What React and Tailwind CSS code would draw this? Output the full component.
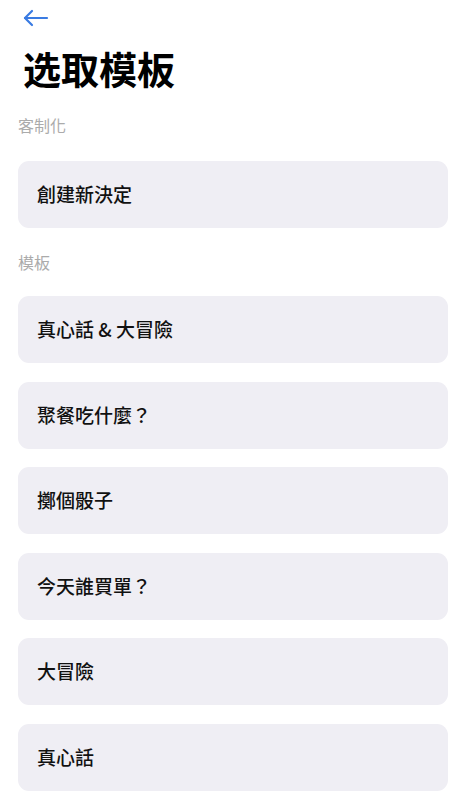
import React from 'react';

const templates = ['真心話 & 大冒險', '聚餐吃什麼？', '擲個骰子', '今天誰買單？', '大冒險', '真心話'];

function Card({ label }) {
  return (
    <button className="flex h-[67px] w-full items-center rounded-[11px] bg-[#efeef4] pl-[19px] text-left text-[19px] font-medium text-[#111]">
      {label}
    </button>
  );
}

export default function App() {
  return (
    <div
      className="min-h-[800px] bg-white px-[18px]"
      style={{ fontFamily: '"Noto Sans CJK TC", "Noto Sans CJK SC", "Noto Sans", sans-serif' }}
    >
      <div className="pt-[9px] pl-[4px]">
        <svg width="28" height="18" viewBox="0 0 28 18" fill="none" stroke="#3a7be2" strokeWidth="2.2" strokeLinecap="round" strokeLinejoin="round">
          <path d="M25 9H3" />
          <path d="M10 2L3 9l7 7" />
        </svg>
      </div>

      <h1 className="mt-[17px] pl-[5px] text-[38px] font-semibold leading-[48px] text-black">选取模板</h1>

      <div className="mt-[21px] text-[16px] leading-[24px] text-[#ababab]">客制化</div>

      <div className="mt-[24px]">
        <Card label="創建新決定" />
      </div>

      <div className="mt-[22px] text-[16px] leading-[24px] text-[#ababab]">模板</div>

      <div className="mt-[22px] flex flex-col gap-[18.5px] pb-[10px]">
        {templates.map((t) => (
          <Card key={t} label={t} />
        ))}
      </div>
    </div>
  );
}
